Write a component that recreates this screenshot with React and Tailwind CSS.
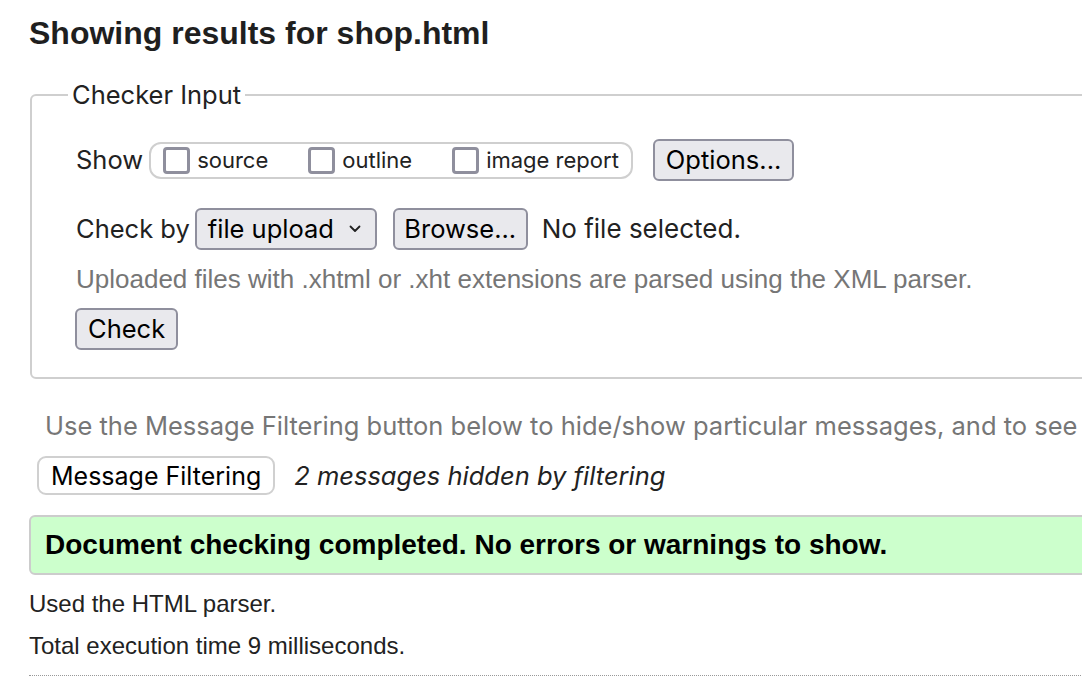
import React from "react";

const sf = "font-['Inter','Liberation_Sans',sans-serif]";
const helv = "font-['Liberation_Sans','Arial',sans-serif]";

function Box({ label }) {
  return (
    <label className="flex items-center">
      <span className="w-[27px] h-[27px] border-[3px] border-[#8f8f9d] rounded-[4px] bg-white" />
      <span className="ml-[7px] text-[22px] leading-[26px] text-[#222]">{label}</span>
    </label>
  );
}

function Button({ children, className = "" }) {
  return (
    <button
      className={`h-[42px] px-[11px] bg-[#e9e9ed] border-2 border-[#8f8f9d] rounded-[6px] text-[25.5px] leading-[28px] text-black ${sf} ${className}`}
    >
      {children}
    </button>
  );
}

export default function App() {
  return (
    <div className={`w-[1082px] h-[688px] overflow-hidden bg-white pl-[29px] pt-[15px] text-[#222] ${helv}`}>
      {/* HEADER */}
      <h2 className="text-[32px] leading-[36px] font-bold text-[#1f1f1f]">
        Showing results for shop.html
      </h2>

      {/* CHECKER INPUT */}
      <fieldset className={`mt-[30px] ml-px w-[1120px] border-2 border-[#cfcfcf] rounded-[6px] pl-[44px] pt-[30px] pb-[27px] ${sf}`}>
        <legend className="-ml-[8px] px-[4px] text-[25.5px] leading-[28px] text-[#222]">
          Checker Input
        </legend>

        <div className="flex items-center h-[42px]">
          <span className="text-[25.5px] leading-[28px]">Show</span>
          <div className="ml-[6px] h-[37px] border-2 border-[#cfcfcf] rounded-[12px] pl-[12px] pr-[12px] flex items-center gap-[40px]">
            <Box label="source" />
            <Box label="outline" />
            <Box label="image report" />
          </div>
          <Button className="ml-[20px]">Options...</Button>
        </div>

        <div className="mt-[27px] flex items-center h-[42px]">
          <span className="text-[25.5px] leading-[28px]">Check by</span>
          <div className="ml-[5px] h-[42px] w-[182px] pl-[11px] pr-[14px] bg-[#e9e9ed] border-2 border-[#8f8f9d] rounded-[6px] flex items-center justify-between">
            <span className="text-[25.5px] leading-[28px] text-black whitespace-nowrap">file upload</span>
            <svg width="12" height="8" viewBox="0 0 12 8" fill="none">
              <path d="M1.5 1.5L6 6L10.5 1.5" stroke="#222" strokeWidth="1.8" strokeLinecap="round" strokeLinejoin="round" />
            </svg>
          </div>
          <Button className="ml-[16px] !px-[9.5px]">Browse...</Button>
          <span className="ml-[14px] text-[26px] leading-[28px]">No file selected.</span>
        </div>

        <p className={`mt-[15px] text-[26px] leading-[28px] text-[#767676] whitespace-nowrap ${helv}`}>
          Uploaded files with .xhtml or .xht extensions are parsed using the XML parser.
        </p>

        <Button className="mt-[15px] -ml-px">Check</Button>
      </fieldset>

      {/* FILTERING */}
      <p className={`mt-[33px] ml-[16px] whitespace-nowrap text-[25.5px] leading-[28px] text-[#767676] ${sf}`}>
        Use the Message Filtering button below to hide/show particular messages, and to see
      </p>
      <div className={`mt-[16px] ml-[8px] flex items-center ${sf}`}>
        <button className="h-[39px] px-[12px] bg-white border-2 border-[#d0d0d0] rounded-[9px] text-[25px] leading-[28px] text-black">
          Message Filtering
        </button>
        <span className="ml-[19px] text-[25.5px] leading-[28px] italic text-[#222]">
          2 messages hidden by filtering
        </span>
      </div>

      {/* RESULT */}
      <div className="mt-[20px] w-[1100px] h-[60px] bg-[#ccffcc] border-2 border-[#cccccc] rounded-[6px] pl-[14px] flex items-center">
        <span className="text-[28px] leading-[32px] font-bold text-black">
          Document checking completed. No errors or warnings to show.
        </span>
      </div>

      <p className="mt-[15px] text-[24px] leading-[28px]">Used the HTML parser.</p>
      <p className="mt-[14px] text-[24px] leading-[28px]">Total execution time 9 milliseconds.</p>
      <div className="mt-[15px] w-[1100px] border-t border-dotted border-[#999]" />
    </div>
  );
}
